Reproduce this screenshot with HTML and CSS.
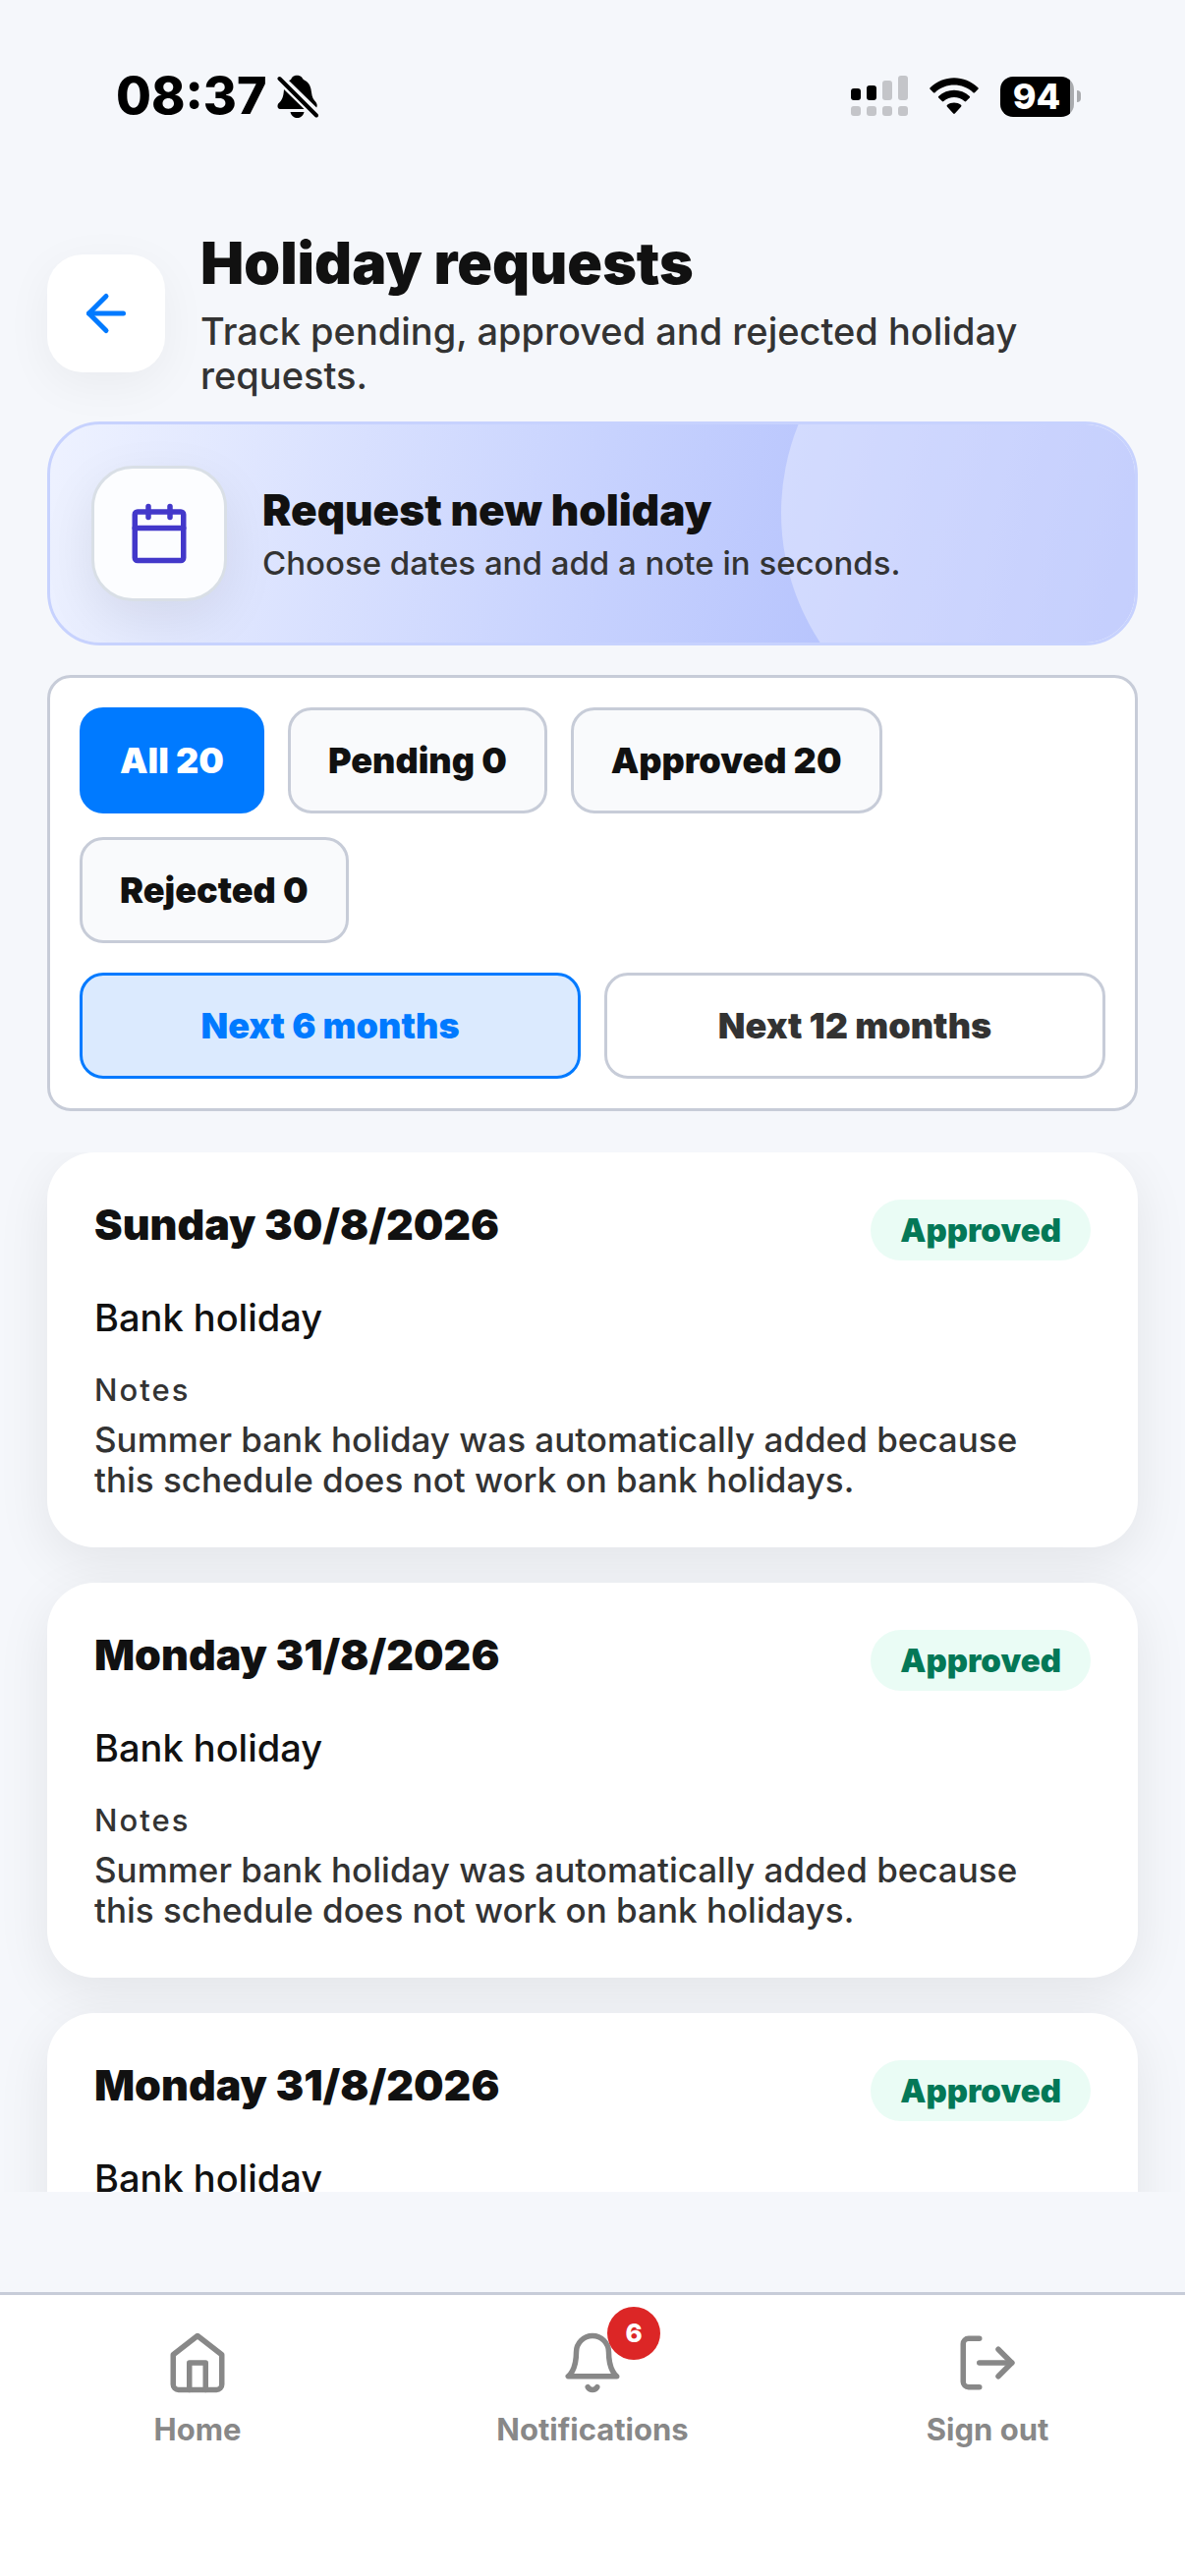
FILE: index.html
```html
<!DOCTYPE html>
<html lang="en">
<head>
    <meta charset="UTF-8">
    <meta name="viewport" content="width=device-width, initial-scale=1.0">
    <title>Holiday requests</title>
    <link rel="stylesheet" href="styles.css">
</head>
<body>
    <div class="app">
        <div class="status-bar">
            <div class="status-left">
                <span class="time">08:37</span>
                <svg class="silent" viewBox="0 0 42 44" aria-hidden="true">
                    <path d="M12 6C14 5.500 14.500 4 15.500 2.500C17.500 .2 23 .2 25 2.500C26 4 26.500 5 28.500 6C33 8.500 34.500 13 35 18C35.500 23 37 25.500 39.500 28C40.800 30 41 31.500 40.200 33.500Z"/>
                    <path d="M7 15L27.500 35H3C.5 35-.2 32 1.200 29.500C5 26 6.500 23 7 15Z"/>
                    <path d="M13.500 38H27.500C26.500 42 23.500 44 20.500 44C17.500 44 14.500 42 13.500 38Z"/>
                    <path class="slash" d="M2.500 4L40 41.500"/>
                </svg>
            </div>
            <div class="status-right">
                <svg class="signal" viewBox="0 0 58 42" aria-hidden="true">
                    <rect x="0" y="13" width="10" height="12" rx="3"/>
                    <rect x="16" y="10" width="10" height="15" rx="3"/>
                    <g class="dim">
                        <rect x="32" y="5" width="10" height="20" rx="3"/>
                        <rect x="48" y="0" width="10" height="25" rx="3"/>
                        <rect x="0" y="31" width="10" height="10" rx="3"/>
                        <rect x="16" y="31" width="10" height="10" rx="3"/>
                        <rect x="32" y="31" width="10" height="10" rx="3"/>
                        <rect x="48" y="31" width="10" height="10" rx="3"/>
                    </g>
                </svg>
                <svg class="wifi" viewBox="0 0 50 38" aria-hidden="true">
                    <path d="M.6 10.200C14-3.200 36-3.200 49.400 10.200Q50.200 11 49.400 11.800L46 15.200Q45.200 16 44.400 15.200C33.500 5 16.500 5 5.600 15.200Q4.800 16 4 15.200L.6 11.800Q-.2 11 .6 10.200Z"/>
                    <path d="M9.200 19C18 10.800 32 10.800 40.800 19Q41.600 19.800 40.800 20.600L37.200 24Q36.400 24.800 35.600 24C29.500 18.500 20.500 18.500 14.400 24Q13.600 24.800 12.800 24L9.200 20.600Q8.400 19.800 9.200 19Z"/>
                    <path d="M18 27.800C22 24.600 28 24.600 32 27.800Q33 28.800 32 29.800L25.800 36.600Q25 37.400 24.200 36.600L18 29.800Q17 28.800 18 27.800Z"/>
                </svg>
                <span class="battery"><span class="battery-level">94</span></span>
            </div>
        </div>

        <header class="header">
            <button class="back-btn" type="button" aria-label="Back">
                <svg viewBox="0 0 24 24" aria-hidden="true">
                    <line x1="19" y1="12" x2="5" y2="12"/>
                    <polyline points="12 19 5 12 12 5"/>
                </svg>
            </button>
            <div class="header-text">
                <h1>Holiday requests</h1>
                <p>Track pending, approved and rejected holiday requests.</p>
            </div>
        </header>

        <button class="request-card" type="button">
            <span class="request-icon">
                <svg viewBox="0 0 24 24" aria-hidden="true">
                    <rect x="3" y="4" width="18" height="18" rx="1"/>
                    <line x1="16" y1="2" x2="16" y2="6"/>
                    <line x1="8" y1="2" x2="8" y2="6"/>
                    <line x1="3" y1="10" x2="21" y2="10"/>
                </svg>
            </span>
            <span class="request-text">
                <span class="request-title">Request new holiday</span>
                <span class="request-sub">Choose dates and add a note in seconds.</span>
            </span>
        </button>

        <section class="filters">
            <div class="chips">
                <button class="chip active" type="button">All 20</button>
                <button class="chip" type="button">Pending 0</button>
                <button class="chip" type="button">Approved 20</button>
                <button class="chip" type="button">Rejected 0</button>
            </div>
            <div class="ranges">
                <button class="range active" type="button">Next 6 months</button>
                <button class="range" type="button">Next 12 months</button>
            </div>
        </section>

        <main class="list">
            <article class="card">
                <div class="card-head">
                    <h2>Sunday 30/8/2026</h2>
                    <span class="status">Approved</span>
                </div>
                <p class="type">Bank holiday</p>
                <h3>Notes</h3>
                <p class="notes">Summer bank holiday was automatically added because this schedule does not work on bank holidays.</p>
            </article>
            <article class="card">
                <div class="card-head">
                    <h2>Monday 31/8/2026</h2>
                    <span class="status">Approved</span>
                </div>
                <p class="type">Bank holiday</p>
                <h3>Notes</h3>
                <p class="notes">Summer bank holiday was automatically added because this schedule does not work on bank holidays.</p>
            </article>
            <article class="card">
                <div class="card-head">
                    <h2>Monday 31/8/2026</h2>
                    <span class="status">Approved</span>
                </div>
                <p class="type">Bank holiday</p>
            </article>
        </main>

        <nav class="tab-bar">
            <a class="tab" href="#home">
                <span class="tab-icon">
                    <svg viewBox="0 0 24 24" aria-hidden="true">
                        <path d="M3 9l9-7 9 7v11a2 2 0 0 1-2 2H5a2 2 0 0 1-2-2z"/>
                        <polyline points="9 22 9 12 15 12 15 22"/>
                    </svg>
                </span>
                Home
            </a>
            <a class="tab" href="#notifications">
                <span class="tab-icon">
                    <svg viewBox="0 0 24 24" aria-hidden="true">
                        <path d="M18 8A6 6 0 0 0 6 8c0 7-3 9-3 9h18s-3-2-3-9"/>
                        <path d="M13.730 21a2 2 0 0 1-3.460 0"/>
                    </svg>
                    <span class="count">6</span>
                </span>
                Notifications
            </a>
            <a class="tab" href="#signout">
                <span class="tab-icon">
                    <svg viewBox="0 0 24 24" aria-hidden="true">
                        <path d="M9 21H5a2 2 0 0 1-2-2V5a2 2 0 0 1 2-2h4"/>
                        <polyline points="16 17 21 12 16 7"/>
                        <line x1="21" y1="12" x2="9" y2="12"/>
                    </svg>
                </span>
                Sign out
            </a>
        </nav>
    </div>
</body>
</html>
```
FILE: styles.css
```css
* {
    box-sizing: border-box;
}

body {
    margin: 0;
    font-family: Inter, "Liberation Sans", sans-serif;
    background-color: #f5f7fb;
    color: #111;
}

h1, h2, h3, p {
    margin: 0;
}

button {
    font-family: inherit;
    cursor: pointer;
}

.app {
    display: flex;
    flex-direction: column;
    height: 100vh;
}

/* Status bar */
.status-bar {
    display: flex;
    justify-content: space-between;
    align-items: center;
    padding: 68px 113px 105px 118px;
}

.status-left, .status-right {
    display: flex;
    align-items: center;
    height: 60px;
}

.status-left {
    gap: 10px;
}

.status-right {
    gap: 22px;
}

.time {
    color: black;
    font-size: 52px;
    font-weight: 800;
    line-height: 60px;
}

.silent {
    width: 42px;
    height: 44px;
}

.slash {
    fill: none;
    stroke: #000;
    stroke-width: 4;
    stroke-linecap: round;
}

.signal {
    width: 58px;
    height: 42px;
}

.dim {
    fill: #c4c5c9;
}

.wifi {
    width: 50px;
    height: 38px;
}

.battery {
    display: flex;
    position: relative;
    width: 75px;
    height: 41px;
    border-radius: 13px;
    background: linear-gradient(to right, #000 71px, #a9abae 71px);
}

.battery::after {
    content: "";
    position: absolute;
    right: -7px;
    top: 14px;
    width: 4px;
    height: 12px;
    border-radius: 0 4px 4px 0;
    background-color: #a9abae;
}

.battery-level {
    width: 74px;
    text-align: center;
    color: white;
    font-size: 36px;
    font-weight: 800;
    line-height: 41px;
}

/* Header */
.header {
    display: flex;
    align-items: center;
    gap: 36px;
    margin: 0 48px 24px;
}

.back-btn {
    display: flex;
    flex: none;
    align-items: center;
    justify-content: center;
    width: 120px;
    height: 120px;
    border: none;
    border-radius: 36px;
    background-color: white;
    box-shadow: 0 12px 48px rgba(0, 0, 0, 0.05);
}

.back-btn svg {
    width: 60px;
    height: 60px;
    fill: none;
    stroke: #007aff;
    stroke-width: 2;
    stroke-linecap: round;
    stroke-linejoin: round;
}

h1 {
    margin-bottom: 12px;
    font-size: 59px;
    font-weight: 900;
    line-height: 70px;
}

.header-text p {
    color: #333;
    font-size: 38px;
    font-weight: 500;
    line-height: 45px;
}

/* Request new holiday */
.request-card {
    display: flex;
    position: relative;
    align-items: center;
    gap: 36px;
    margin: 0 48px 30px;
    padding: 42px;
    border: 3px solid #c7d2fe;
    border-radius: 54px;
    background: linear-gradient(102deg, #eef2ff, #c7d2fe 50%, #a5b4fc) padding-box;
    text-align: left;
    overflow: hidden;
}

.request-card::before {
    content: "";
    position: absolute;
    top: -150px;
    right: -120px;
    width: 480px;
    height: 480px;
    border-radius: 50%;
    background-color: rgba(255, 255, 255, 0.35);
}

.request-icon {
    display: flex;
    flex: none;
    align-items: center;
    justify-content: center;
    width: 138px;
    height: 138px;
    border: 3px solid #d9dfe6;
    border-radius: 42px;
    background-color: #fcfdff;
    box-shadow: 0 18px 54px rgba(0, 0, 0, 0.08);
}

.request-icon svg {
    width: 66px;
    height: 66px;
    fill: none;
    stroke: #4338ca;
    stroke-width: 2;
    stroke-linecap: round;
    stroke-linejoin: round;
}

.request-text {
    display: flex;
    position: relative;
    flex-direction: column;
    gap: 9px;
}

.request-title {
    color: #111;
    font-size: 44px;
    font-weight: 900;
    line-height: 51px;
}

.request-sub {
    color: #333;
    font-size: 33px;
    font-weight: 500;
    line-height: 39px;
}

/* Filters */
.filters {
    margin: 0 48px 42px;
    padding: 30px;
    border: 3px solid #c7ccd8;
    border-radius: 24px;
    background-color: white;
}

.chips {
    display: flex;
    flex-wrap: wrap;
    gap: 24px;
    margin-bottom: 30px;
}

.ranges {
    display: flex;
    gap: 24px;
}

.chip, .range {
    height: 108px;
    padding: 0 38px;
    border: 3px solid #c7ccd8;
    border-radius: 24px;
    font-size: 36px;
    font-weight: 900;
}

.chip {
    background-color: #f9fafc;
    color: #111;
}

.chip.active {
    border-color: #007aff;
    background-color: #007aff;
    color: white;
}

.range {
    flex: 1;
    background-color: white;
    color: #333;
}

.range.active {
    border-color: #007aff;
    background-color: #dbeafe;
    color: #007aff;
}

/* Request list */
.list {
    display: flex;
    flex: 1;
    flex-direction: column;
    gap: 36px;
    min-height: 0;
    margin-bottom: 102px;
    padding: 0 48px;
    overflow: hidden;
}

.card {
    flex: none;
    padding: 48px;
    border-radius: 48px;
    background-color: white;
    box-shadow: 0 15px 54px rgba(0, 0, 0, 0.08);
}

.card-head {
    display: flex;
    justify-content: space-between;
    align-items: flex-start;
    margin-bottom: 36px;
}

h2 {
    font-size: 43px;
    font-weight: 900;
    line-height: 51px;
}

.status {
    padding: 12px 30px;
    border-radius: 31px;
    background-color: #eafcf5;
    color: #047857;
    font-size: 33px;
    font-weight: 900;
    line-height: 38px;
}

.type {
    margin-bottom: 33px;
    font-size: 38px;
    font-weight: 500;
    line-height: 45px;
}

h3 {
    margin-bottom: 12px;
    color: #333;
    font-size: 31px;
    font-weight: 500;
    line-height: 36px;
    letter-spacing: 2px;
}

.notes {
    padding-right: 36px;
    color: #333;
    font-size: 35px;
    font-weight: 500;
    line-height: 41px;
}

/* Bottom tabs */
.tab-bar {
    display: flex;
    padding: 36px 0 132px;
    border-top: 3px solid #c7ccd8;
    background-color: white;
}

.tab {
    display: flex;
    flex: 1;
    flex-direction: column;
    align-items: center;
    gap: 18px;
    color: #888;
    font-size: 31px;
    font-weight: 700;
    line-height: 34px;
    text-decoration: none;
}

.tab-icon {
    display: flex;
    position: relative;
}

.tab-icon svg {
    width: 66px;
    height: 66px;
    fill: none;
    stroke: #888;
    stroke-width: 2;
    stroke-linecap: round;
    stroke-linejoin: round;
}

.count {
    position: absolute;
    top: -24px;
    right: -36px;
    width: 54px;
    height: 54px;
    border-radius: 27px;
    background-color: #dc2626;
    color: white;
    font-size: 26px;
    font-weight: 800;
    line-height: 54px;
    text-align: center;
}
```
